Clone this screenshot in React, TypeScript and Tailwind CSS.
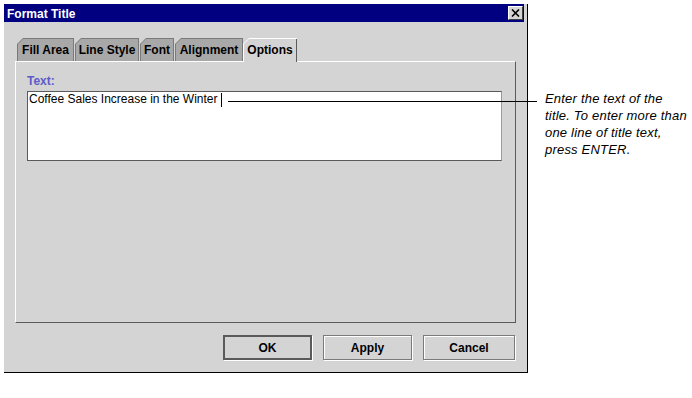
import React from "react";

const tabs = [
  { label: "Fill Area", w: "w-[57px]", ml: "ml-0" },
  { label: "Line Style", w: "w-[64px]", ml: "ml-[1px]" },
  { label: "Font", w: "w-[34px]", ml: "ml-[1px]" },
  { label: "Alignment", w: "w-[68px]", ml: "ml-[1px]" },
];

function Tab({ label, w, ml }: { label: string; w: string; ml: string }) {
  return (
    <div
      className={`${w} ${ml} h-[23px] bg-[#7a7a7a] pt-px pl-px pr-px [clip-path:polygon(6px_0,100%_0,100%_100%,0_100%,0_6px)]`}
    >
      <div className="h-full bg-[#a8a8a8] flex items-center justify-center text-[12px] font-bold text-black [clip-path:polygon(5px_0,100%_0,100%_100%,0_100%,0_5px)]">
        {label}
      </div>
    </div>
  );
}

function Button({ label, w, def }: { label: string; w: string; def?: boolean }) {
  return (
    <div
      className={`${w} h-[25px] flex items-center justify-center text-[12px] font-bold text-black bg-[#d4d4d4] ${
        def
          ? "border-2 border-[#5a5a5a] shadow-[1px_1px_0_#ffffff]"
          : "border border-[#7a7a7a] shadow-[inset_1px_1px_0_#ffffff,1px_1px_0_#ffffff]"
      }`}
    >
      {label}
    </div>
  );
}

export default function App() {
  return (
    <div className="relative w-[692px] h-[398px] bg-white overflow-hidden font-['Liberation_Sans',Arial,sans-serif]">
      <div className="flex pt-[4px] pl-[4px]">
        <div className="w-[524px] h-[369px] bg-[#d4d4d4] border-r border-b border-black flex flex-col">
          {/* title bar */}
          <div className="h-[18px] mr-[3px] bg-[#000080] flex items-center justify-between pl-[3px] pr-[1px]">
            <span className="text-white text-[12px] font-bold leading-[14px] mt-px">Format Title</span>
            <div className="w-[15px] h-[14px] bg-[#d4d4d4] border-t border-l border-white border-r border-b border-r-[#404040] border-b-[#404040] flex items-center justify-center">
              <svg width="9" height="8" viewBox="0 0 9 8">
                <path d="M1 0.5 L8 7.5 M8 0.5 L1 7.5" stroke="#000" strokeWidth="1.6" />
              </svg>
            </div>
          </div>

          {/* tabs */}
          <div className="relative z-10 mt-[16px] ml-[13px] flex items-end h-[23px]">
            {tabs.map((t) => (
              <Tab key={t.label} {...t} />
            ))}
            <div className="w-[54px] h-[24px] -mb-px bg-white pt-px pl-px [clip-path:polygon(6px_0,100%_0,100%_100%,0_100%,0_6px)]">
              <div className="h-full bg-[#d4d4d4] border-r border-[#5a5a5a] flex items-center justify-center pb-px text-[12px] font-bold text-black [clip-path:polygon(5px_0,100%_0,100%_100%,0_100%,0_5px)]">
                Options
              </div>
            </div>
          </div>

          {/* panel */}
          <div className="ml-[11px] w-[501px] h-[262px] border-t border-l border-white border-r border-b border-r-[#5a5a5a] border-b-[#5a5a5a] pt-[12px] pl-[11px]">
            <div className="text-[12px] leading-[14px] font-bold text-[#5c5cc8]">Text:</div>
            <div className="mt-[3px] w-[475px] h-[70px] bg-white border border-[#5a5a5a] border-r-[#9a9a9a] border-b-[#5a5a5a] pl-px">
              <div className="flex items-start text-[12px] leading-[15px] text-black">
                <span>Coffee Sales Increase in the Winter</span>
                <span className="ml-[3px] mt-px w-px h-[14px] bg-black" />
              </div>
            </div>
          </div>

          {/* buttons */}
          <div className="mt-[12px] flex justify-end gap-[11px] pr-[12px]">
            <Button label="OK" w="w-[89px]" def />
            <Button label="Apply" w="w-[89px]" />
            <Button label="Cancel" w="w-[92px]" />
          </div>
        </div>

        <div className="ml-[17px] pt-[86px] italic text-[13px] leading-[17px] text-black tracking-[0.2px]">
          <div>Enter the text of the</div>
          <div>title. To enter more than</div>
          <div>one line of title text,</div>
          <div>press ENTER.</div>
        </div>
      </div>

      {/* callout line */}
      <div className="absolute left-[228px] top-[101px] w-[309px] h-px bg-black" />
    </div>
  );
}
